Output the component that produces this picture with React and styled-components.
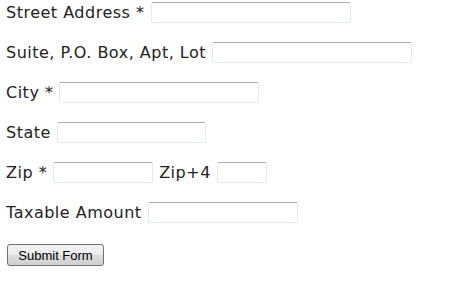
import React from 'react'
import styled, { createGlobalStyle } from 'styled-components'

const Global = createGlobalStyle`
  body {
    margin: 0;
    background: #fff;
    font-family: "DejaVu Sans", Verdana, sans-serif;
    font-size: 16px;
    color: #222;
  }
`

const Form = styled.form`
  display: flex;
  flex-direction: column;
  gap: 19px;
  padding: 2px 6px;
`

const Row = styled.div`
  display: flex;
  align-items: center;
  height: 21px;
`

const Label = styled.label`
  margin-right: 6px;
  white-space: nowrap;
  letter-spacing: 0.5px;
`

const Input = styled.input`
  box-sizing: border-box;
  width: ${p => p.$w}px;
  height: 21px;
  margin: 0 6px 0 0;
  padding: 1px 3px;
  border: 1px solid #e3e9ef;
  border-top-color: #abadb3;
  border-radius: 2px;
  background: #fff;
  font: inherit;
`

const Submit = styled.button`
  margin-top: 2px;
  margin-left: 1px;
  align-self: flex-start;
  width: 97px;
  height: 22px;
  padding: 0;
  border: 1px solid #707070;
  border-radius: 3px;
  background: linear-gradient(#f2f2f2 0%, #ebebeb 50%, #dddddd 51%, #cfcfcf 100%);
  font-family: "Liberation Sans", Arial, sans-serif;
  font-size: 13px;
  color: #000;
`

const fields = [
  [{ label: 'Street Address *', w: 200 }],
  [{ label: 'Suite, P.O. Box, Apt, Lot', w: 200 }],
  [{ label: 'City *', w: 200 }],
  [{ label: 'State', w: 149 }],
  [{ label: 'Zip *', w: 100 }, { label: 'Zip+4', w: 50 }],
  [{ label: 'Taxable Amount', w: 150 }]
]

export default function App () {
  return (
    <>
      <Global />
      <Form onSubmit={e => e.preventDefault()}>
        {fields.map((row, i) => (
          <Row key={i}>
            {row.map(f => (
              <React.Fragment key={f.label}>
                <Label>{f.label}</Label>
                <Input type='text' $w={f.w} />
              </React.Fragment>
            ))}
          </Row>
        ))}
        <Submit type='submit'>Submit Form</Submit>
      </Form>
    </>
  )
}
